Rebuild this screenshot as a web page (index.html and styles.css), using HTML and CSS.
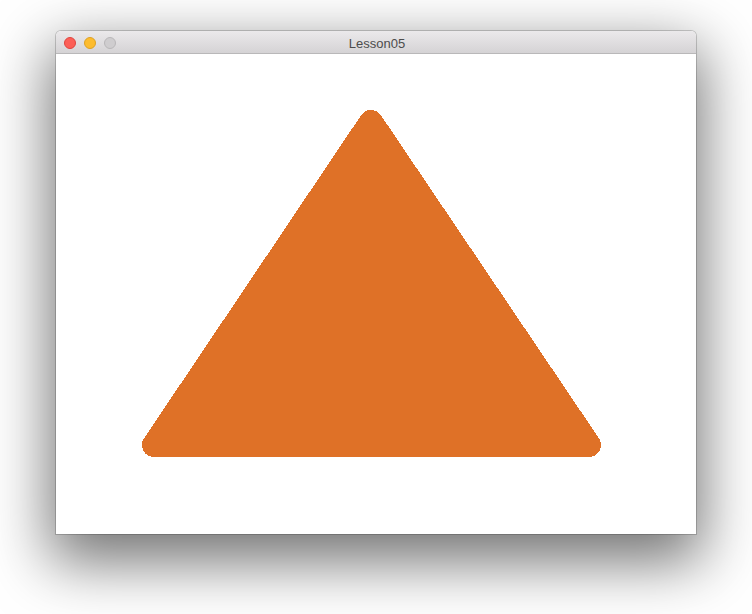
FILE: index.html
```html
<!DOCTYPE html>
<html>
<head>
<meta charset="utf-8">
<title>Lesson05</title>
<link rel="stylesheet" href="styles.css">
</head>
<body>
<div class="stage">
  <div class="window">
    <div class="titlebar">
      <div class="lights">
        <span class="light close"></span>
        <span class="light min"></span>
        <span class="light zoom"></span>
      </div>
      <div class="title">Lesson05</div>
    </div>
    <div class="content">
      <svg class="canvas" width="640" height="480" viewBox="0 0 640 480" shape-rendering="crispEdges">
        <polygon points="315,68 98,391 533,391" fill="#df7127" stroke="#df7127" stroke-width="24" stroke-linejoin="round"/>
      </svg>
    </div>
  </div>
</div>
</body>
</html>
```

FILE: styles.css
```css
html, body {
  margin: 0;
  padding: 0;
  background: #ffffff;
  overflow: hidden;
}
.stage {
  padding: 31px 0 0 56px;
  width: 752px;
  height: 614px;
  box-sizing: border-box;
}
.window {
  width: 640px;
  border-radius: 5px 5px 0 0;
  box-shadow: 0 22px 60px 6px rgba(0,0,0,0.55), 0 0 0 1px rgba(0,0,0,0.18);
  background: #ffffff;
}
.titlebar {
  position: relative;
  height: 22px;
  border-bottom: 1px solid #b9b8b9;
  border-radius: 5px 5px 0 0;
  background: linear-gradient(#ebe9eb, #d5d3d5);
  display: flex;
  align-items: center;
  justify-content: center;
}
.lights {
  position: absolute;
  left: 8px;
  top: 6px;
  display: flex;
  gap: 8px;
}
.light {
  width: 12px;
  height: 12px;
  border-radius: 50%;
  box-sizing: border-box;
}
.close { background: #fc5f57; border: 1px solid #e0443e; }
.min { background: #fdbc2e; border: 1px solid #dea123; }
.zoom { background: #cfcdcf; border: 1px solid #b9b7b9; }
.title {
  font-family: "Liberation Sans", Arial, sans-serif;
  font-size: 13px;
  color: #4c4c4c;
  line-height: 22px;
  padding-top: 3px;
  margin-left: 2px;
}
.content {
  height: 480px;
  background: #ffffff;
}
.canvas {
  display: block;
}
```
